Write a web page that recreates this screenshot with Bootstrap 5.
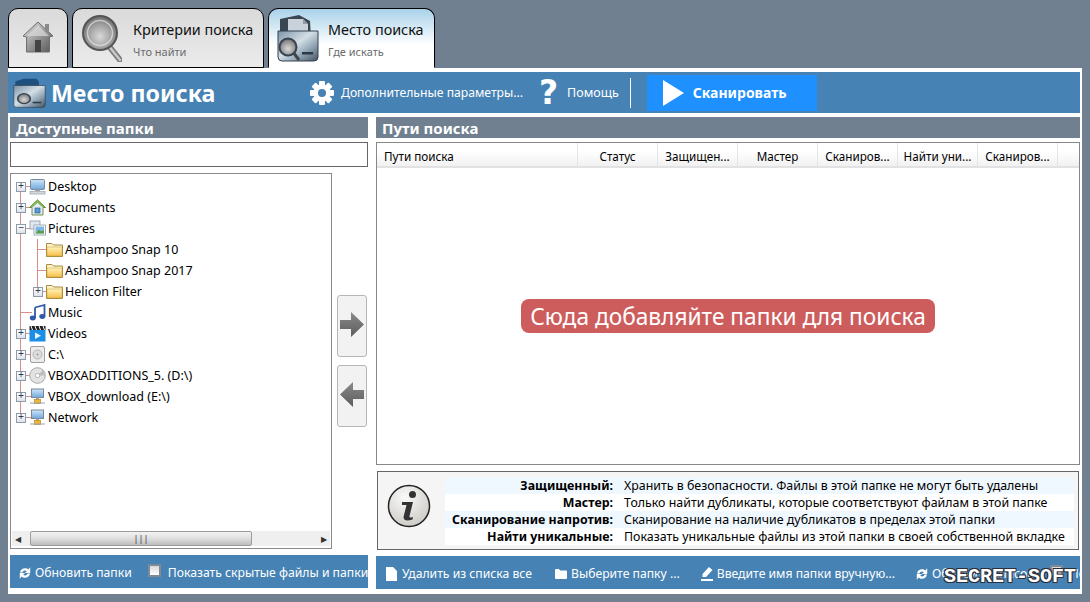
<!DOCTYPE html>
<html lang="ru">

<head>
    <meta charset="UTF-8" />
    <meta name="viewport" content="width=device-width, initial-scale=1.0" />
    <link rel="stylesheet" href="https://cdn.jsdelivr.net/npm/bootstrap@5.3.6/dist/css/bootstrap.min.css" />
    <script src="https://cdn.jsdelivr.net/npm/bootstrap@5.3.6/dist/js/bootstrap.bundle.min.js"></script>
    <title>Место поиска</title>
    <style>
        html, body { height: 602px; overflow: hidden; }
        body {
            background: #708090;
            margin: 0;
            padding: 8px 8px 8px 8px;
            font-family: "Noto Sans", "Open Sans", sans-serif;
            font-size: 12.5px;
            color: #000;
        }
        /* tabs */
        .tab-strip { height: 60px; gap: 4px; }
        .tab-item {
            height: 60px;
            border: 1px solid #000;
            border-radius: 10px 10px 0 0;
            background: linear-gradient(#dadada, #ebebeb);
        }
        .tab-home { width: 60px; }
        .tab-find { width: 192px; padding-left: 9px; }
        .tab-place {
            width: 167px;
            padding-left: 8px;
            border-bottom-color: #fff;
            background: linear-gradient(#a9d2ea, #fff 62%);
        }
        .tab-text { padding-top: 2px; }
        .tab-title { font-size: 14.4px; line-height: 20px; color: #111; }
        .tab-sub { font-size: 11px; line-height: 14px; color: #6b6b6b; margin-top: 5px; }
        .tab-find .tab-text { margin-left: 11px; }
        .tab-place .tab-text { margin-left: 9px; }

        /* main white panel */
        .main-panel {
            width: 1074px;
            height: 526px;
            background: #fff;
            padding-top: 4px;
        }
        .top-bar {
            width: 1072px;
            height: 41px;
            background: #4682b4;
            color: #fff;
            padding-left: 5px;
        }
        .top-title { font-size: 23.2px; font-weight: 700; margin-left: 5px; padding-top: 1px; width: 259px; white-space: nowrap; }
        .top-link { font-size: 12.2px; white-space: nowrap; padding-top: 2px; }
        .top-more { margin-left: 7px; }
        .top-help { font-size: 12.5px; margin-left: 5px; }
        .top-q { font-family: "DejaVu Sans", sans-serif; font-weight: 700; font-size: 33px; line-height: 41px; width: 27px; margin-left: 12px; text-align: center; }
        .top-sep { width: 1px; height: 30px; background: #fff; margin: 0 16px 0 11px; }
        .scan-btn {
            width: 170px;
            height: 36px;
            background: #1e90ff;
            color: #fff;
            border: 0;
            border-radius: 0;
            padding: 0 0 0 16px;
            font-size: 14px;
            font-weight: 700;
            gap: 9px;
        }

        .work-area {
            display: grid;
            grid-template-columns: 358px 704px;
            column-gap: 8px;
            padding: 4px 0 0 2px;
        }
        .sec-head {
            height: 21px;
            background: #708090;
            color: #fff;
            font-weight: 700;
            font-size: 15px;
            line-height: 23px;
            padding-left: 6px;
        }
        .find-input {
            height: 25px;
            margin-top: 4px;
            border: 1px solid #666;
            border-radius: 0;
            padding: 0 4px;
        }

        /* tree */
        .tree-box {
            width: 322px;
            height: 376px;
            margin-top: 6px;
            border: 1px solid #8a8a8a;
        }
        .tree-list { padding-top: 2px; }
        .tree-row {
            height: 21px;
            --ln: #d98e8e;
            background-repeat: no-repeat;
            font-size: 12.5px;
            white-space: nowrap;
            padding-top: 2px;
        }
        .tree-row svg, .tree-row .expander { margin-top: -2px; }
        .tree-row svg { flex: none; }
        .lvl0 { padding-left: 4px; background-image: linear-gradient(var(--ln), var(--ln)), linear-gradient(var(--ln), var(--ln)); background-size: 1px 100%, 12px 1px; background-position: 9px 0, 9px 10px; }
        .lvl0.first { background-size: 1px 50%, 12px 1px; background-position: 9px 100%, 9px 10px; }
        .lvl0.last { background-size: 1px 50%, 12px 1px; background-position: 9px 0, 9px 10px; }
        .lvl1 {
            padding-left: 35px;
            background-image: linear-gradient(var(--ln), var(--ln)), linear-gradient(var(--ln), var(--ln)), linear-gradient(var(--ln), var(--ln));
            background-size: 1px 100%, 1px 100%, 10px 1px;
            background-position: 9px 0, 26px 0, 26px 10px;
        }
        .lvl1.last { background-size: 1px 100%, 1px 50%, 10px 1px; padding-left: 21px; }
        .expander {
            width: 10px; height: 10px;
            flex: none;
            border: 1px solid #8f9ba8;
            background: linear-gradient(#fff, #dfe3e8);
            color: #2b3a55;
            display: flex; align-items: center; justify-content: center;
            font-size: 10px; line-height: 1;
            font-family: "Liberation Mono", monospace;
            margin-left: 1px;
        }
        .no-exp { width: 11px; flex: none; }
        .tree-ico { width: 17px; height: 17px; margin: 0 2px 0 3px; }
        .lvl1 .tree-ico { margin-left: 0; }
        .lvl1 .expander + .tree-ico { margin-left: 3px; }

        .h-scroll {
            height: 15px;
            margin: 0 1px 2px 1px;
            background: #efefef;
        }
        .h-thumb {
            width: 222px;
            height: 15px;
            margin-left: 6px;
            border: 1px solid #9c9c9c;
            border-radius: 2px;
            background: linear-gradient(#f2f2f2, #e2e2e2 45%, #bdbdbd);
            color: #333;
            font-size: 9px;
            line-height: 11px;
        }
        .h-arrow { width: 12px; text-align: center; font-size: 8px; line-height: 15px; color: #333; flex: none; }

        .move-btn {
            width: 30px;
            height: 62px;
            padding: 0 0 3px 0;
            background: #f2f2f2;
            border: 1px solid #b5b5b5;
            border-radius: 3px;
        }
        .move-col { width: 36px; gap: 8px; margin-top: 6px; padding-left: 5px; }

        /* list on the right */
        .paths-box { height: 323px; margin-top: 4px; border: 1px solid #888; }
        .col-head {
            height: 25px;
            background: linear-gradient(#fff 35%, #f1f1f1);
            border-bottom: 2px solid #e2e2e2;
            font-size: 11.7px;
        }
        .col-cell { width: 80px; height: 100%; border-right: 1px solid #e4e4e4; text-align: center; line-height: 27px; white-space: nowrap; overflow: hidden; }
        .col-first { width: 201px; text-align: left; padding-left: 7px; }
        .drop-hint {
            height: 34px;
            background: #cd5c5c;
            color: #fff;
            font-size: 22.7px;
            line-height: 36px;
            padding: 0 9px;
            border-radius: 8px;
            white-space: nowrap;
        }

        .info-box {
            height: 79px;
            margin: 6px 1px 0 1px;
            border: 1px solid #666;
            background: #f5f5f5;
            padding: 5px 4px 0 0;
        }
        .info-ico { width: 67px; flex: none; padding: 7px 0 0 9px; }
        .info-row { height: 17px; line-height: 17px; font-size: 12.4px; white-space: nowrap; background: #fff; }
        .info-row.tint { background: #f0f8ff; }
        .info-key { width: 168px; text-align: right; font-weight: 700; }
        .info-val { margin-left: 11px; }

        /* bottom bars */
        .foot-bar {
            height: 33px;
            margin-top: 6px;
            padding-top: 4px;
            background: #4682b4;
            color: #fff;
            font-size: 12.2px;
            white-space: nowrap;
            overflow: hidden;
        }
        .foot-left { padding-left: 9px; }
        .foot-right { padding-left: 10px; position: relative; }
        .foot-item svg { flex: none; margin-right: 4px; }
        .foot-right .foot-item:first-child svg { margin-right: 5px; }
        .gap-wide { margin-left: 23px; }
        .gap-thin { margin-left: 21px; }
        .tick-box { width: 13px; height: 13px; border: 2px solid #7f8a96; background: linear-gradient(#d8d8d8, #fff); flex: none; margin: 0 7px 6px 16px; }
        .stamp {
            position: absolute;
            right: 4px;
            top: 12px;
            font-family: "Liberation Mono", monospace;
            font-weight: 700;
            font-size: 20px;
            line-height: 17px;
            color: #fff;
            text-shadow: -1px -1px 0 #2a2f3a, 1px -1px 0 #2a2f3a, -1px 1px 0 #2a2f3a, 1px 1px 0 #2a2f3a;
        }
    </style>
</head>

<body>
    <svg width="0" height="0" class="d-block">
        <defs>
            <linearGradient id="metal" x1="0" y1="0" x2="1" y2="1">
                <stop offset="0" stop-color="#e8e8e8" /><stop offset=".5" stop-color="#9a9a9a" /><stop offset="1" stop-color="#555" />
            </linearGradient>
            <radialGradient id="lens" cx=".5" cy=".6" r=".6">
                <stop offset="0" stop-color="#d9d9d9" /><stop offset=".6" stop-color="#9d9d9d" /><stop offset="1" stop-color="#6a6a6a" />
            </radialGradient>
            <linearGradient id="fold" x1="0" y1="0" x2="1" y2="1">
                <stop offset="0" stop-color="#7d94a8" /><stop offset=".45" stop-color="#d3dee6" /><stop offset=".7" stop-color="#8fa3b4" /><stop offset="1" stop-color="#44525f" />
            </linearGradient>
            <linearGradient id="yfold" x1="0" y1="0" x2="0" y2="1">
                <stop offset="0" stop-color="#fff3b8" /><stop offset="1" stop-color="#f7c04a" />
            </linearGradient>
            <linearGradient id="screen" x1="0" y1="0" x2="0" y2="1">
                <stop offset="0" stop-color="#cfe6fa" /><stop offset="1" stop-color="#6fa8dc" />
            </linearGradient>
            <linearGradient id="arrowg" x1="0" y1="0" x2="0" y2="1">
                <stop offset="0" stop-color="#8a8a8a" /><stop offset="1" stop-color="#5c5c5c" />
            </linearGradient>
            <symbol id="i-pc" viewBox="0 0 17 17">
                <rect x="1.500" y="1.500" width="14" height="10" rx="1" fill="url(#screen)" stroke="#7a8794" />
                <rect x="6" y="11.500" width="5" height="1.500" fill="#99a3ad" />
                <rect x="1" y="13.500" width="15" height="2.500" fill="#d5d9dd" stroke="#8a939c" stroke-width=".6" />
            </symbol>
            <symbol id="i-home" viewBox="0 0 17 17">
                <path d="M8.500 1 16.500 8.500H14V16H3V8.500H.5Z" fill="#e4edf3" stroke="#6d8f4e" />
                <path d="M8.500 1 16.500 8.500 14.500 8.500 8.500 3.500 2.500 8.500H.5Z" fill="#8cc152" stroke="#5f8a3a" stroke-width=".6" />
                <rect x="6" y="9" width="5" height="5" fill="#5b9bd5" stroke="#2f5f8f" stroke-width=".7" />
            </symbol>
            <symbol id="i-pics" viewBox="0 0 17 17">
                <rect x="1" y="1" width="10" height="8" fill="#dfe9f3" stroke="#8b97a3" stroke-width=".8" />
                <rect x="5" y="5" width="11.500" height="10" fill="#fff" stroke="#8b97a3" stroke-width=".8" />
                <rect x="6.500" y="6.500" width="8.500" height="7" fill="#7fb6e6" />
                <path d="M6.500 13.500 10 9.500 12.500 11.500 15 10V13.500Z" fill="#5e9e3e" />
            </symbol>
            <symbol id="i-fold" viewBox="0 0 17 17">
                <path d="M.5 2.500H6L7.500 4H16.500V15.500H.5Z" fill="#fdf3c7" stroke="#a98a3e" />
                <rect x="1" y="6" width="15" height="9" fill="url(#yfold)" stroke="#c49a3c" stroke-width=".5" />
            </symbol>
            <symbol id="i-music" viewBox="0 0 17 17">
                <path d="M6 3.500 15.500 1V12.500" fill="none" stroke="#2e5aa8" stroke-width="1.800" />
                <path d="M6 3.500V14" fill="none" stroke="#2e5aa8" stroke-width="1.800" />
                <ellipse cx="3.800" cy="14" rx="3" ry="2.400" fill="#2e5aa8" />
                <ellipse cx="13.300" cy="12.500" rx="3" ry="2.400" fill="#2e5aa8" />
            </symbol>
            <symbol id="i-video" viewBox="0 0 17 17">
                <rect x=".5" y="1" width="16" height="4" fill="#222" />
                <path d="M2 1 3.500 5M6 1 7.500 5M10 1 11.500 5M14 1 15.500 5" stroke="#fff" stroke-width="1" />
                <rect x=".5" y="5" width="16" height="11.500" fill="#1b8fe6" />
                <path d="M6 7.500 12 10.800 6 14Z" fill="#e9f5ff" />
            </symbol>
            <symbol id="i-disk" viewBox="0 0 17 17">
                <rect x="1.500" y=".5" width="14" height="16" rx="1.500" fill="#ececec" stroke="#a0a0a0" />
                <circle cx="8.500" cy="8.500" r="4.500" fill="#dcdcdc" stroke="#b5b5b5" />
                <circle cx="8.500" cy="8.500" r="1" fill="#999" />
            </symbol>
            <symbol id="i-cd" viewBox="0 0 17 17">
                <circle cx="8.500" cy="8.500" r="7.800" fill="#e3e3e3" stroke="#a6a6a6" />
                <path d="M8.500 8.500 14 3A7.800 7.800 0 0 1 16 8.500Z" fill="#bdbdbd" />
                <circle cx="8.500" cy="8.500" r="2.200" fill="#fff" stroke="#9a9a9a" stroke-width=".7" />
            </symbol>
            <symbol id="i-net" viewBox="0 0 17 17">
                <rect x="2.500" y="1" width="12" height="8.500" fill="url(#screen)" stroke="#7a8794" />
                <rect x="7" y="9.500" width="3" height="2" fill="#9aa3ab" />
                <rect x="5.500" y="11.500" width="6" height="4" fill="#f2b632" stroke="#b9861b" stroke-width=".7" />
                <path d="M1 15H16" stroke="#9aa3ab" />
            </symbol>
            <symbol id="i-refresh" viewBox="0 0 12 12">
                <path d="M1 5.400C1.500 2.500 3.800 1.200 6 1.200 7.400 1.200 8.500 1.700 9.300 2.500L11.200.3V6H5.800L7.800 4.200C7.300 3.700 6.700 3.400 6 3.400 4.800 3.400 3.800 4.200 3.400 5.400Z" fill="#fff" />
                <path d="M11 6.600C10.500 9.500 8.200 10.800 6 10.800 4.600 10.800 3.500 10.300 2.700 9.500L.8 11.700V6H6.200L4.200 7.800C4.700 8.300 5.300 8.600 6 8.600 7.200 8.600 8.200 7.800 8.600 6.600Z" fill="#fff" />
            </symbol>
        </defs>
    </svg>

    <div class="tab-strip d-flex">
        <div class="tab-item tab-home d-flex align-items-center justify-content-center">
            <svg width="32" height="34" viewBox="0 0 32 34">
                <path d="M16 1 31 15 27.500 16V31H4.500V16L1 15Z" fill="url(#metal)" stroke="#6e6e6e" />
                <rect x="23" y="3" width="4" height="8" fill="#8a8a8a" />
                <rect x="13" y="19" width="6" height="12" fill="#444" />
                <path d="M16 4 27 15H5Z" fill="#dcdcdc" opacity=".7" />
            </svg>
        </div>
        <div class="tab-item tab-find d-flex align-items-center">
            <svg width="40" height="48" viewBox="0 0 40 48" class="flex-shrink-0">
                <path d="M26 31 38 46" stroke="#7b7b7b" stroke-width="6" stroke-linecap="round" />
                <path d="M26 31 38 46" stroke="#c9c9c9" stroke-width="2.500" stroke-linecap="round" />
                <circle cx="18" cy="19" r="17" fill="url(#lens)" stroke="#555" stroke-width="2" />
                <circle cx="18" cy="19" r="12.500" fill="none" stroke="#e6e6e6" stroke-width="1.500" opacity=".7" />
            </svg>
            <div class="tab-text">
                <div class="tab-title">Критерии поиска</div>
                <div class="tab-sub">Что найти</div>
            </div>
        </div>
        <div class="tab-item tab-place d-flex align-items-center">
            <svg width="42" height="48" viewBox="0 0 42 48" class="flex-shrink-0">
                <path d="M3 5 22 1 33 7 34 24H3Z" fill="#3a4652" />
                <path d="M11 5H26L31 10V22H11Z" fill="#c9d2da" />
                <path d="M26 5V10H31Z" fill="#8f9daa" />
                <path d="M1 17H41V43Q41 47 37 47H5Q1 47 1 43Z" fill="url(#fold)" stroke="#33414e" />
                <rect x="25" y="38" width="11" height="2.500" fill="#2c3843" />
                <path d="M16 38 22 46" stroke="#444" stroke-width="3" />
                <circle cx="11" cy="33" r="8.500" fill="url(#lens)" stroke="#36424d" stroke-width="2" />
            </svg>
            <div class="tab-text">
                <div class="tab-title">Место поиска</div>
                <div class="tab-sub">Где искать</div>
            </div>
        </div>
    </div>

    <div class="main-panel">
        <div class="top-bar d-flex align-items-center">
            <svg width="33" height="30" viewBox="0 0 42 48" preserveAspectRatio="none" class="flex-shrink-0">
                <path d="M3 5 14 1H30L33 6V22H3Z" fill="#1f4f7c" />
                <path d="M1 12H41V43Q41 47 37 47H5Q1 47 1 43Z" fill="url(#fold)" stroke="#33414e" />
                <rect x="25" y="38" width="11" height="2.500" fill="#2c3843" />
                <circle cx="14" cy="33" r="8" fill="url(#lens)" stroke="#36424d" stroke-width="2" />
            </svg>
            <div class="top-title">Место поиска</div>
            <svg width="24" height="24" viewBox="0 0 24 24" class="flex-shrink-0">
                <g fill="#fff">
                    <rect x="9" y="0" width="6" height="24" rx="1" />
                    <rect x="9" y="0" width="6" height="24" rx="1" transform="rotate(45 12 12)" />
                    <rect x="9" y="0" width="6" height="24" rx="1" transform="rotate(90 12 12)" />
                    <rect x="9" y="0" width="6" height="24" rx="1" transform="rotate(135 12 12)" />
                    <circle cx="12" cy="12" r="8.500" />
                </g>
                <circle cx="12" cy="12" r="4" fill="#4682b4" />
            </svg>
            <div class="top-link top-more">Дополнительные параметры...</div>
            <div class="top-q">?</div>
            <div class="top-link top-help">Помощь</div>
            <div class="top-sep"></div>
            <button type="button" class="btn scan-btn d-flex align-items-center">
                <svg width="21" height="26" viewBox="0 0 21 26"><path d="M0 0 21 13 0 26Z" fill="#fff" /></svg>
                Сканировать
            </button>
        </div>

        <div class="work-area">
            <div>
                <div class="sec-head">Доступные папки</div>
                <input type="text" class="form-control find-input d-block" />
                <div class="d-flex">
                    <div class="tree-box d-flex flex-column">
                        <div class="tree-list flex-grow-1">
                            <div class="tree-row lvl0 first d-flex align-items-center"><span class="expander">+</span><svg class="tree-ico"><use href="#i-pc" /></svg>Desktop</div>
                            <div class="tree-row lvl0 d-flex align-items-center"><span class="expander">+</span><svg class="tree-ico"><use href="#i-home" /></svg>Documents</div>
                            <div class="tree-row lvl0 d-flex align-items-center"><span class="expander">−</span><svg class="tree-ico"><use href="#i-pics" /></svg>Pictures</div>
                            <div class="tree-row lvl1 d-flex align-items-center"><svg class="tree-ico"><use href="#i-fold" /></svg>Ashampoo Snap 10</div>
                            <div class="tree-row lvl1 d-flex align-items-center"><svg class="tree-ico"><use href="#i-fold" /></svg>Ashampoo Snap 2017</div>
                            <div class="tree-row lvl1 last d-flex align-items-center"><span class="expander">+</span><svg class="tree-ico"><use href="#i-fold" /></svg>Helicon Filter</div>
                            <div class="tree-row lvl0 d-flex align-items-center"><span class="no-exp"></span><svg class="tree-ico"><use href="#i-music" /></svg>Music</div>
                            <div class="tree-row lvl0 d-flex align-items-center"><span class="expander">+</span><svg class="tree-ico"><use href="#i-video" /></svg>Videos</div>
                            <div class="tree-row lvl0 d-flex align-items-center"><span class="expander">+</span><svg class="tree-ico"><use href="#i-disk" /></svg>C:\</div>
                            <div class="tree-row lvl0 d-flex align-items-center"><span class="expander">+</span><svg class="tree-ico"><use href="#i-cd" /></svg>VBOXADDITIONS_5. (D:\)</div>
                            <div class="tree-row lvl0 d-flex align-items-center"><span class="expander">+</span><svg class="tree-ico"><use href="#i-net" /></svg>VBOX_download (E:\)</div>
                            <div class="tree-row lvl0 last d-flex align-items-center"><span class="expander">+</span><svg class="tree-ico"><use href="#i-net" /></svg>Network</div>
                        </div>
                        <div class="h-scroll d-flex align-items-center">
                            <span class="h-arrow">◀</span>
                            <div class="h-thumb d-flex align-items-center justify-content-center">|||</div>
                            <span class="flex-grow-1"></span>
                            <span class="h-arrow">▶</span>
                        </div>
                    </div>
                    <div class="move-col d-flex flex-column justify-content-center">
                        <button type="button" class="btn move-btn d-flex align-items-center justify-content-center">
                            <svg width="24" height="25" viewBox="0 0 24 25"><path d="M0 8H11V0L24 12.500 11 25V17H0Z" fill="url(#arrowg)" /></svg>
                        </button>
                        <button type="button" class="btn move-btn d-flex align-items-center justify-content-center">
                            <svg width="24" height="25" viewBox="0 0 24 25"><path d="M24 8H13V0L0 12.500 13 25V17H24Z" fill="url(#arrowg)" /></svg>
                        </button>
                    </div>
                </div>
                <div class="foot-bar foot-left d-flex align-items-center">
                    <span class="foot-item d-flex align-items-center"><svg width="12" height="12"><use href="#i-refresh" /></svg>Обновить папки</span>
                    <span class="tick-box"></span>Показать скрытые файлы и папки
                </div>
            </div>

            <div>
                <div class="sec-head">Пути поиска</div>
                <div class="paths-box d-flex flex-column">
                    <div class="col-head d-flex">
                        <div class="col-cell col-first">Пути поиска</div>
                        <div class="col-cell">Статус</div>
                        <div class="col-cell">Защищен...</div>
                        <div class="col-cell">Мастер</div>
                        <div class="col-cell">Сканиров...</div>
                        <div class="col-cell">Найти уни...</div>
                        <div class="col-cell">Сканиров...</div>
                    </div>
                    <div class="flex-grow-1 d-flex align-items-center justify-content-center">
                        <div class="drop-hint">Сюда добавляйте папки для поиска</div>
                    </div>
                </div>
                <div class="info-box d-flex">
                    <div class="info-ico">
                        <svg width="44" height="44" viewBox="0 0 44 44">
                            <defs><radialGradient id="ibg" cx=".4" cy=".3" r=".8"><stop offset="0" stop-color="#fafafa" /><stop offset="1" stop-color="#c9c6c0" /></radialGradient></defs>
                            <circle cx="22" cy="22" r="20.500" fill="url(#ibg)" stroke="#222" stroke-width="1.500" />
                            <circle cx="25.500" cy="10.500" r="3.500" fill="#333" />
                            <path d="M15 18H26L22.500 32Q22 34.500 26 33L25.500 35.500Q17 38.500 16.500 33L19.500 21H15Z" fill="#333" />
                        </svg>
                    </div>
                    <div class="flex-grow-1">
                        <div class="info-row tint d-flex"><div class="info-key">Защищенный:</div><div class="info-val">Хранить в безопасности. Файлы в этой папке не могут быть удалены</div></div>
                        <div class="info-row d-flex"><div class="info-key">Мастер:</div><div class="info-val">Только найти дубликаты, которые соответствуют файлам в этой папке</div></div>
                        <div class="info-row tint d-flex"><div class="info-key">Сканирование напротив:</div><div class="info-val">Сканирование на наличие дубликатов в пределах этой папки</div></div>
                        <div class="info-row d-flex"><div class="info-key">Найти уникальные:</div><div class="info-val">Показать уникальные файлы из этой папки в своей собственной вкладке</div></div>
                    </div>
                </div>
                <div class="foot-bar foot-right d-flex align-items-center">
                    <span class="foot-item d-flex align-items-center"><svg width="11" height="14" viewBox="0 0 11 14"><path d="M0 0H7L11 4V14H0Z" fill="#fff" /></svg>Удалить из списка все</span>
                    <span class="foot-item gap-wide d-flex align-items-center"><svg width="12" height="10" viewBox="0 0 12 10"><path d="M0 1Q0 0 1 0H4L5 1.500H11Q12 1.500 12 2.500V9Q12 10 11 10H1Q0 10 0 9Z" fill="#fff" /></svg>Выберите папку ...</span>
                    <span class="foot-item gap-thin d-flex align-items-center"><svg width="12" height="14" viewBox="0 0 12 14"><path d="M8 0 11.500 3 5 10H1.500V7ZM0 12H12V14H0Z" fill="#fff" /></svg>Введите имя папки вручную...</span>
                    <span class="foot-item gap-thin d-flex align-items-center"><svg width="12" height="12"><use href="#i-refresh" /></svg>Обновить список</span>
                    <span class="tick-box"></span>Показ
                    <div class="stamp">SECRET-SOFT</div>
                </div>
            </div>
        </div>
    </div>
</body>

</html>
